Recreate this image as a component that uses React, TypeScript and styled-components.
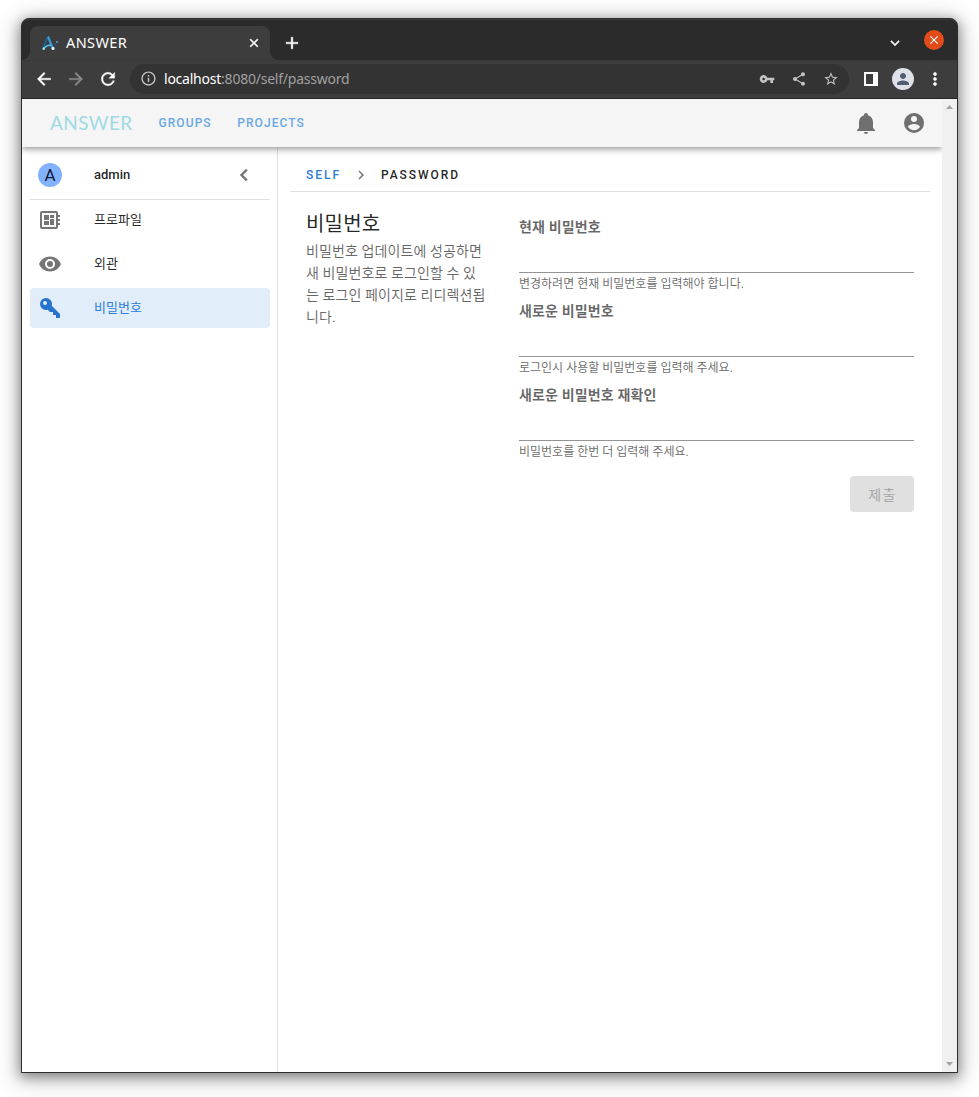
import React from "react";
import styled, { createGlobalStyle, css } from "styled-components";
import {
  MdArrowBack,
  MdArrowForward,
  MdChevronLeft,
  MdChevronRight,
  MdClose,
  MdAdd,
  MdExpandMore,
  MdInfoOutline,
  MdMoreVert,
  MdPerson,
  MdRefresh,
  MdShare,
  MdStarBorder,
  MdVpnKey,
} from "react-icons/md";

const GlobalStyle = createGlobalStyle`
  *, *::before, *::after { box-sizing: border-box; }
  body {
    margin: 0;
    background: #fff;
    font-family: Roboto, "Noto Sans CJK KR", sans-serif;
  }
  svg { display: block; flex: none; }
`;

const Desktop = styled.div`
  height: 1097px;
  padding: 18px 21px 24px;
  overflow: hidden;
`;

const BrowserWindow = styled.div`
  width: 937px;
  height: 1055px;
  display: flex;
  flex-direction: column;
  border: 1px solid #2b2b2b;
  border-radius: 8px 8px 0 0;
  background: #2b2b2b;
  box-shadow: 0 3px 12px 1px rgba(0, 0, 0, 0.36), 0 4px 22px 4px rgba(0, 0, 0, 0.22);
`;

const TabStrip = styled.div`
  height: 41px;
  display: flex;
  align-items: flex-end;
  padding-left: 8px;
  border-top: 1px solid #3c3c3c;
  border-radius: 7px 7px 0 0;
  font-family: "Noto Sans", sans-serif;
`;

const Tab = styled.div`
  position: relative;
  width: 240px;
  height: 34px;
  display: flex;
  align-items: center;
  padding: 0 9px 0 12px;
  border-radius: 8px 8px 0 0;
  background: #3d3d3d;
  color: #fff;
  font-size: 14.5px;

  &::before,
  &::after {
    content: "";
    position: absolute;
    bottom: 0;
    width: 8px;
    height: 8px;
  }
  &::before {
    left: -8px;
    background: radial-gradient(circle at 0 0, transparent 7.5px, #3d3d3d 8px);
  }
  &::after {
    right: -8px;
    background: radial-gradient(circle at 100% 0, transparent 7.5px, #3d3d3d 8px);
  }
`;

const TabTitle = styled.span`
  flex: 1;
  margin-left: 8px;
  padding-bottom: 2px;
  line-height: 20px;
  letter-spacing: 0.4px;
`;

const TabClose = styled(MdClose)`
  path:not([fill="none"]) {
    stroke-width: 1;
  }
`;

const NewTab = styled.div`
  width: 28px;
  height: 34px;
  display: grid;
  place-items: center;
  margin-left: 8px;
  color: #fff;

  path:not([fill="none"]) {
    stroke-width: 0.5;
  }
`;

const WindowControls = styled.div`
  height: 40px;
  display: flex;
  align-items: center;
  gap: 20px;
  margin-left: auto;
  padding-right: 13px;
  color: #f2f2f2;
`;

const TabSearch = styled.div`
  padding-top: 5px;

  path:not([fill="none"]) {
    stroke-width: 0.5;
  }
`;

const CloseWindow = styled.div`
  width: 20px;
  height: 20px;
  display: grid;
  place-items: center;
  border-radius: 50%;
  background: #e24c1a;
  color: #fff;
`;

const Toolbar = styled.div`
  height: 39px;
  display: flex;
  align-items: center;
  padding: 0 12px 2px;
  background: #3d3d3d;
  border-bottom: 1px solid #242424;
  border-top: 1px solid #3a3a3a;
  color: #fff;
`;

const ToolButton = styled.div<{ $muted?: boolean; $left?: number }>`
  width: 20px;
  display: grid;
  place-items: center;
  margin-left: ${(p) => p.$left ?? 0}px;
  color: ${(p) => (p.$muted ? "#8a8a8a" : "#fff")};

  path:not([fill="none"]) {
    stroke-width: 0.4;
  }
`;

const AddressBar = styled.div`
  width: 719px;
  height: 30px;
  display: flex;
  align-items: center;
  margin-left: 12px;
  padding: 0 10px;
  border-radius: 15px;
  background: #333;
  color: #c4c4c4;
`;

const Url = styled.span`
  flex: 1;
  margin-left: 7px;
  color: #a0a0a0;
  font-family: "Noto Sans", sans-serif;
  font-size: 14px;
  line-height: 20px;
  letter-spacing: -0.23px;
`;

const Host = styled.span`
  color: #fff;
`;

const AddressActions = styled.div`
  display: flex;
  gap: 16px;
`;

const Profile = styled.div`
  width: 22px;
  height: 22px;
  display: grid;
  place-items: center;
  margin-left: 11px;
  border-radius: 50%;
  background: #dfe1e8;
  color: #515b72;
`;

const Viewport = styled.div`
  flex: 1;
  display: flex;
  min-height: 0;
  background: #fff;
`;

const Page = styled.div`
  flex: 1;
  display: flex;
  flex-direction: column;
  overflow: hidden;
`;

const Scrollbar = styled.div`
  width: 15px;
  display: flex;
  flex-direction: column;
  justify-content: space-between;
  align-items: center;
  padding: 6px 0;
  background: #f0f0f0;
  color: #a3a3a3;
`;

const AppBar = styled.header`
  z-index: 1;
  height: 48px;
  display: flex;
  align-items: center;
  padding: 0 16px 0 28px;
  background: #f5f5f5;
  box-shadow: 0 2px 4px -1px rgba(0, 0, 0, 0.2), 0 4px 5px 0 rgba(0, 0, 0, 0.14),
    0 1px 10px 0 rgba(0, 0, 0, 0.12);
  color: #707070;
`;

const Brand = styled.div`
  width: 83px;
  padding-bottom: 1px;
  color: #9edbe4;
  font-family: Lato, sans-serif;
  font-size: 19px;
  line-height: 23px;
  letter-spacing: 0.4px;
  white-space: nowrap;
`;

const NavLink = styled.a`
  margin-left: 25.5px;
  color: #6aa8e6;
  font-size: 12px;
  font-weight: 500;
  letter-spacing: 1.07px;
`;

const AppBarActions = styled.div`
  display: flex;
  gap: 24px;
  margin-left: auto;
`;

const Body = styled.div`
  flex: 1;
  display: flex;
`;

const Sidebar = styled.nav`
  width: 256px;
  padding: 4px 7px 0 8px;
  border-right: 1px solid #e0e0e0;
`;

const Account = styled.div`
  height: 49px;
  display: flex;
  align-items: center;
  padding: 0 14px 1px 8px;
  border-bottom: 1px solid #e0e0e0;
  color: rgba(0, 0, 0, 0.87);
  font-size: 13px;
  font-weight: 500;
`;

const Avatar = styled.div`
  width: 24px;
  height: 24px;
  display: grid;
  place-items: center;
  margin-right: 32px;
  border-radius: 50%;
  background: #82b1ff;
  font-size: 17px;
  font-weight: 400;
`;

const Collapse = styled.div`
  margin-left: auto;
  color: #757575;

  path:not([fill="none"]) {
    stroke-width: 0.4;
  }
`;

const MenuItem = styled.a<{ $active?: boolean }>`
  height: 40px;
  display: flex;
  align-items: center;
  gap: 32px;
  margin-bottom: 4px;
  padding: 0 8px;
  border-radius: 4px;
  color: rgba(0, 0, 0, 0.87);
  font-size: 13px;

  svg {
    color: #757575;
  }
  ${(p) =>
    p.$active &&
    css`
      background: #e1edf9;
      color: #2a80dc;
      svg {
        color: #2673cf;
      }
    `}
`;

const MenuLabel = styled.span`
  padding-bottom: 3px;
`;

const Content = styled.main`
  flex: 1;
  padding: 0 12px;
`;

const Breadcrumbs = styled.div`
  height: 45px;
  display: flex;
  align-items: center;
  padding: 11px 16px 0;
  border-bottom: 1px solid #e0e0e0;
  font-size: 12px;
  font-weight: 500;
  letter-spacing: 1.95px;
  color: rgba(0, 0, 0, 0.87);
`;

const CrumbLink = styled.a`
  color: #2a7ddb;
`;

const Separator = styled.span`
  margin: 0 11px;
  color: #777;
`;

const Section = styled.section`
  display: flex;
  padding: 18px 16px 0;
`;

const Intro = styled.div`
  width: 181px;
  margin-right: 32px;
`;

const Title = styled.h1`
  margin: 0;
  color: rgba(0, 0, 0, 0.87);
  font-size: 20px;
  font-weight: 400;
  line-height: 28px;
  letter-spacing: 0.2px;
`;

const Description = styled.p`
  margin: 2px 0 0;
  color: rgba(0, 0, 0, 0.6);
  font-size: 14px;
  line-height: 22px;
  letter-spacing: 0.1px;
  word-break: break-all;
`;

const Form = styled.form`
  flex: 1;
  display: flex;
  flex-direction: column;
`;

const Field = styled.label`
  height: 84px;
  display: flex;
  flex-direction: column;
`;

const FieldLabel = styled.span`
  height: 32px;
  padding-top: 6px;
  color: rgba(0, 0, 0, 0.6);
  font-size: 14px;
  font-weight: 700;
  line-height: 22px;
  letter-spacing: 0.15px;
`;

const Input = styled.input`
  height: 31px;
  width: 100%;
  padding: 0;
  border: 0;
  border-bottom: 1px solid #949494;
  background: none;
  outline: 0;
`;

const Hint = styled.span`
  padding-top: 1px;
  color: rgba(0, 0, 0, 0.6);
  font-size: 12px;
  line-height: 20px;
`;

const Submit = styled.button`
  width: 64px;
  height: 36px;
  align-self: flex-end;
  margin-top: 14px;
  padding: 0 0 0 1px;
  border: 0;
  border-radius: 4px;
  background: #e0e0e0;
  color: #a6a6a6;
  font: 400 14px Roboto, "Noto Sans CJK KR", sans-serif;
  letter-spacing: 1.25px;
`;

const icons = {
  bell: "M21,19V20H3V19L5,17V11C5,7.9 7.03,5.17 10,4.29C10,4.19 10,4.1 10,4A2,2 0 0,1 12,2A2,2 0 0,1 14,4C14,4.1 14,4.19 14,4.29C16.97,5.17 19,7.9 19,11V17L21,19M14,21A2,2 0 0,1 12,23A2,2 0 0,1 10,21",
  account:
    "M12,19.2C9.5,19.2 7.29,17.92 6,16C6.03,14 10,12.9 12,12.9C14,12.9 17.97,14 18,16C16.71,17.92 14.5,19.2 12,19.2M12,5A3,3 0 0,1 15,8A3,3 0 0,1 12,11A3,3 0 0,1 9,8A3,3 0 0,1 12,5M12,2A10,10 0 0,0 2,12A10,10 0 0,0 12,22A10,10 0 0,0 22,12C22,6.47 17.5,2 12,2Z",
  board:
    "M22,9V7H20V5A2,2 0 0,0 18,3H4A2,2 0 0,0 2,5V19A2,2 0 0,0 4,21H18A2,2 0 0,0 20,19V17H22V15H20V13H22V11H20V9H22M18,19H4V5H18V19M6,13H11V17H6V13M12,7H16V10H12V7M6,7H11V12H6V7M12,11H16V17H12V11Z",
  eye: "M12,9A3,3 0 0,0 9,12A3,3 0 0,0 12,15A3,3 0 0,0 15,12A3,3 0 0,0 12,9M12,17A5,5 0 0,1 7,12A5,5 0 0,1 12,7A5,5 0 0,1 17,12A5,5 0 0,1 12,17M12,4.5C7,4.5 2.73,7.61 1,12C2.73,16.39 7,19.5 12,19.5C17,19.5 21.27,16.39 23,12C21.27,7.61 17,4.5 12,4.5Z",
  key: "M22,18V22H18V19H15V16H12L9.74,13.74C9.19,13.91 8.61,14 8,14A6,6 0 0,1 2,8A6,6 0 0,1 8,2A6,6 0 0,1 14,8C14,8.61 13.91,9.19 13.74,9.74L22,18M7,5A2,2 0 0,0 5,7A2,2 0 0,0 7,9A2,2 0 0,0 9,7A2,2 0 0,0 7,5Z",
};

function Icon({ name }: { name: keyof typeof icons }) {
  return (
    <svg width="24" height="24" viewBox="0 0 24 24" fill="currentColor">
      <path d={icons[name]} />
    </svg>
  );
}

function Favicon() {
  return (
    <svg width="16" height="16" viewBox="0 0 16 16" fill="none">
      <path d="M1.5 13 5.5 2" stroke="#1d6299" strokeWidth="1.8" />
      <path d="M6 1.5 10.6 13" stroke="#3a9ad6" strokeWidth="2.2" />
      <path d="M1.5 13.6C4 11 7 9.8 9 10.6" stroke="#57c4e8" strokeWidth="1.6" />
      <path d="M11.5 12.5 15 7" stroke="#1d5c92" strokeWidth="1" />
      <circle cx="1.7" cy="13.7" r="1.3" fill="#9be4f7" />
      <circle cx="11" cy="13.4" r="1.6" fill="#d8f4fc" />
      <circle cx="15" cy="6.8" r="0.9" fill="#5db9e6" />
    </svg>
  );
}

const menu: { icon: keyof typeof icons; label: string; active?: boolean }[] = [
  { icon: "board", label: "프로파일" },
  { icon: "eye", label: "외관" },
  { icon: "key", label: "비밀번호", active: true },
];

const fields = [
  { label: "현재 비밀번호", hint: "변경하려면 현재 비밀번호를 입력해야 합니다." },
  { label: "새로운 비밀번호", hint: "로그인시 사용할 비밀번호를 입력해 주세요." },
  { label: "새로운 비밀번호 재확인", hint: "비밀번호를 한번 더 입력해 주세요." },
];

export default function App() {
  return (
    <Desktop>
      <GlobalStyle />
      <BrowserWindow>
        <TabStrip>
          <Tab>
            <Favicon />
            <TabTitle>ANSWER</TabTitle>
            <TabClose size={14} />
          </Tab>
          <NewTab>
            <MdAdd size={20} />
          </NewTab>
          <WindowControls>
            <TabSearch>
              <MdExpandMore size={18} />
            </TabSearch>
            <CloseWindow>
              <MdClose size={14} />
            </CloseWindow>
          </WindowControls>
        </TabStrip>
        <Toolbar>
          <ToolButton>
            <MdArrowBack size={20} />
          </ToolButton>
          <ToolButton $muted $left={12}>
            <MdArrowForward size={20} />
          </ToolButton>
          <ToolButton $left={12}>
            <MdRefresh size={20} />
          </ToolButton>
          <AddressBar>
            <MdInfoOutline size={17} />
            <Url>
              <Host>localhost</Host>:8080/self/password
            </Url>
            <AddressActions>
              <MdVpnKey size={16} />
              <MdShare size={16} />
              <MdStarBorder size={16} />
            </AddressActions>
          </AddressBar>
          <ToolButton $left={12}>
            <svg width="14" height="14" viewBox="0 0 14 14">
              <path d="M0 0h14v14H0zM2 2v10h7V2z" fill="#fff" fillRule="evenodd" />
            </svg>
          </ToolButton>
          <Profile>
            <MdPerson size={18} />
          </Profile>
          <ToolButton $left={11}>
            <MdMoreVert size={20} />
          </ToolButton>
        </Toolbar>
        <Viewport>
          <Page>
            <AppBar>
              <Brand>ANSWER</Brand>
              <NavLink>GROUPS</NavLink>
              <NavLink>PROJECTS</NavLink>
              <AppBarActions>
                <Icon name="bell" />
                <Icon name="account" />
              </AppBarActions>
            </AppBar>
            <Body>
              <Sidebar>
                <Account>
                  <Avatar>A</Avatar>
                  admin
                  <Collapse>
                    <MdChevronLeft size={24} />
                  </Collapse>
                </Account>
                {menu.map((item) => (
                  <MenuItem key={item.label} $active={item.active}>
                    <Icon name={item.icon} />
                    <MenuLabel>{item.label}</MenuLabel>
                  </MenuItem>
                ))}
              </Sidebar>
              <Content>
                <Breadcrumbs>
                  <CrumbLink>SELF</CrumbLink>
                  <Separator>
                    <MdChevronRight size={18} />
                  </Separator>
                  PASSWORD
                </Breadcrumbs>
                <Section>
                  <Intro>
                    <Title>비밀번호</Title>
                    <Description>
                      비밀번호 업데이트에 성공하면 새 비밀번호로 로그인할 수 있는 로그인 페이지로 리디렉션됩니다.
                    </Description>
                  </Intro>
                  <Form>
                    {fields.map((field) => (
                      <Field key={field.label}>
                        <FieldLabel>{field.label}</FieldLabel>
                        <Input type="password" />
                        <Hint>{field.hint}</Hint>
                      </Field>
                    ))}
                    <Submit type="button" disabled>
                      제출
                    </Submit>
                  </Form>
                </Section>
              </Content>
            </Body>
          </Page>
          <Scrollbar>
            <svg width="7" height="4" viewBox="0 0 7 4">
              <path d="M0 4 3.5 0 7 4z" fill="currentColor" />
            </svg>
            <svg width="7" height="4" viewBox="0 0 7 4">
              <path d="M0 0 3.5 4 7 0z" fill="currentColor" />
            </svg>
          </Scrollbar>
        </Viewport>
      </BrowserWindow>
    </Desktop>
  );
}
